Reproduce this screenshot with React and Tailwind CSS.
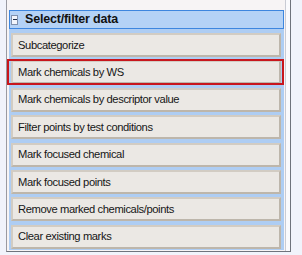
import React from "react";

const items = [
  "Subcategorize",
  "Mark chemicals by WS",
  "Mark chemicals by descriptor value",
  "Filter points by test conditions",
  "Mark focused chemical",
  "Mark focused points",
  "Remove marked chemicals/points",
  "Clear existing marks",
];

function MinusBox() {
  return (
    <div className="w-[7px] h-[10px] border border-[#7f90ad] bg-[#f2f5fb] flex items-center justify-center">
      <div className="w-[4px] h-[1px] bg-[#1f2d48]" />
    </div>
  );
}

export default function App() {
  return (
    <div
      className="w-[302px] h-[255px] bg-[#f1f3fb] overflow-hidden"
      style={{ fontFamily: '"Liberation Sans", Arial, sans-serif' }}
    >
      <div className="ml-[6px] w-[285px] h-[252px] flex border-l border-r border-b border-l-[#9a9aa2] border-r-[#6f737c] border-b-[#6f737c] bg-[#f7f4f5]">
        <div className="w-[278px] pt-[10px] pl-[2px]">
          <div className="w-[275px]">
            <div className="h-[19px] border border-[#3d86df] bg-[#b4d2f6] flex items-center pl-[1px] gap-[7px]">
              <MinusBox />
              <span className="text-[12.5px] font-bold text-[#111] tracking-[-0.2px]">Select/filter data</span>
            </div>
            <div className="bg-[#aecdf3] pl-[2px] pr-[3px] pt-[4px] pb-[1px] flex flex-col gap-[3.4px]">
              {items.map((label, i) => (
                <div key={i} className="relative">
                  <div className="h-[24px] bg-[#ebe8e4] border-2 border-[#d2ccc3] border-r-[#bdb6ab] border-b-[#bdb6ab] flex items-center pl-[5px]">
                    <span className="text-[11.2px] text-[#161616] tracking-[-0.4px] whitespace-nowrap">{label}</span>
                  </div>
                  {i === 1 && (
                    <div className="absolute -left-[4px] -right-[3px] -top-[1px] -bottom-[1px] border-2 border-[#c8161d]" />
                  )}
                </div>
              ))}
            </div>
          </div>
        </div>
        <div className="flex-1 border-l border-[#c9cbd4] bg-[#fafafd]" />
      </div>
    </div>
  );
}
